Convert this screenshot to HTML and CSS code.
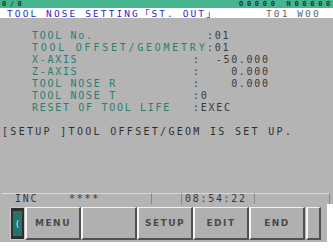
FILE: index.html
```html
<!DOCTYPE html>
<html>
<head>
<meta charset="utf-8">
<link rel="stylesheet" href="styles.css">
</head>
<body>
<div class="screen">
  <div class="topbar">
    <span class="prog">0/0</span>
    <span class="onum">O0000 N00000</span>
  </div>
  <div class="titlebar">
    <span class="title">TOOL NOSE SETTING<span class="cjk">「</span>ST. OUT<span class="cjk">」</span></span>
    <span class="tool">T01 W00</span>
  </div>
  <div class="content">
    <div class="row"><span class="lbl wide">TOOL No.</span><span class="val">:01</span></div>
    <div class="row"><span class="lbl wide geo">TOOL OFFSET/GEOMETRY</span><span class="val">:01</span></div>
    <div class="row"><span class="lbl">X-AXIS</span><span class="val">:</span><span class="num">-50.000</span></div>
    <div class="row"><span class="lbl">Z-AXIS</span><span class="val">:</span><span class="num">0.000</span></div>
    <div class="row"><span class="lbl">TOOL NOSE R</span><span class="val">:</span><span class="num">0.000</span></div>
    <div class="row"><span class="lbl">TOOL NOSE T</span><span class="val">:0</span></div>
    <div class="row"><span class="lbl">RESET OF TOOL LIFE</span><span class="val">:EXEC</span></div>
    <div class="msg">[SETUP ]TOOL OFFSET/GEOM IS SET UP.</div>
  </div>
  <div class="status">
    <div class="cell c1">INC&nbsp;&nbsp;&nbsp;&nbsp;****</div>
    <div class="cell c2"></div>
    <div class="cell c3">08:54:22</div>
    <div class="cell c4"></div>
  </div>
  <div class="keys">
    <div class="key small left"><span class="arrow">(</span></div>
    <div class="key">MENU</div>
    <div class="key"></div>
    <div class="key">SETUP</div>
    <div class="key">EDIT</div>
    <div class="key">END</div>
    <div class="key small right"></div>
  </div>
</div>
</body>
</html>
```

FILE: styles.css
```css
html, body {
  margin: 0;
  padding: 0;
  background: #ffffff;
}
body {
  width: 333px;
  height: 252px;
  overflow: hidden;
  font-family: "DejaVu Sans Mono", "Liberation Mono", monospace;
}
.topbar {
  height: 8px;
  background: #46b48e;
  display: flex;
  justify-content: space-between;
  align-items: center;
  font-size: 7px;
  font-weight: bold;
  color: #153a2d;
  padding: 0 2px 0 2px;
  line-height: 8px;
  letter-spacing: 3.5px;
}
.onum {
  letter-spacing: 3.7px;
  margin-right: -3px;
}
.titlebar {
  height: 10px;
  padding-top: 1px;
  box-sizing: border-box;
  background: #ffffff;
  display: flex;
  align-items: center;
  font-size: 9.5px;
  line-height: 9px;
  letter-spacing: 2.1px;
  padding-left: 7px;
}
.title {
  color: #2a2ac8;
  width: 259px;
  flex: none;
  white-space: nowrap;
}
.cjk {
  font-family: "Noto Sans CJK JP", sans-serif;
  letter-spacing: 2px;
}
.tool {
  color: #666666;
  white-space: nowrap;
}
.content {
  background: #b4b4b4;
  height: 175px;
  padding-top: 12px;
  box-sizing: border-box;
  font-size: 10px;
  letter-spacing: 1.7px;
}
.row {
  height: 12px;
  line-height: 12px;
  display: flex;
  padding-left: 32px;
  white-space: nowrap;
}
.lbl {
  color: #2b7d6e;
  width: 161px;
  flex: none;
}
.lbl.wide {
  width: 175px;
}
.lbl.geo {
  letter-spacing: 2.75px;
}
.val {
  color: #3a3a3a;
}
.num {
  color: #3a3a3a;
  width: 69px;
  text-align: right;
}
.msg {
  margin-top: 12px;
  padding-left: 2px;
  line-height: 12px;
  color: #303030;
  white-space: nowrap;
  letter-spacing: 2.3px;
}
.status {
  height: 11px;
  display: flex;
  background: #b4b4b4;
  font-size: 10px;
  line-height: 10px;
  letter-spacing: 1.7px;
  color: #383838;
  padding: 0 3px 0 2px;
}
.cell {
  border-top: 1px solid #dadada;
  border-right: 1px solid #8a8a8a;
  box-sizing: border-box;
  height: 11px;
}
.c1 { width: 150px; padding-left: 13px; }
.c2 { width: 30px; }
.c3 { width: 73px; padding-left: 3px; }
.c4 { flex: 1; }
.keys {
  height: 38px;
  background: #b4b4b4;
  display: flex;
  padding: 3px 0 2px 10px;
  box-sizing: border-box;
  margin-right: 6px;
}
.key {
  width: 56px;
  height: 33px;
  flex: none;
  background: #b0b0b0;
  border-top: 1px solid #f0f0f0;
  border-left: 2px solid #f4f4f4;
  border-right: 2px solid #505050;
  border-bottom: 2px solid #505050;
  box-sizing: border-box;
  display: flex;
  align-items: center;
  justify-content: center;
  font-family: "DejaVu Sans", sans-serif;
  font-weight: bold;
  font-size: 9px;
  letter-spacing: 1.5px;
  color: #4a4a4a;
}
.key.small {
  width: 15px;
}
.key.left {
  background: #2f2f2f;
  border: 1px solid #c8c8c8;
  padding: 3px 2px;
}
.key.right {
  margin-left: 1px;
}
.arrow {
  display: flex;
  align-items: center;
  justify-content: center;
  width: 100%;
  height: 100%;
  background: #24736c;
  color: #d8f0ec;
  font-weight: normal;
  font-size: 9px;
  letter-spacing: 0;
}
```
